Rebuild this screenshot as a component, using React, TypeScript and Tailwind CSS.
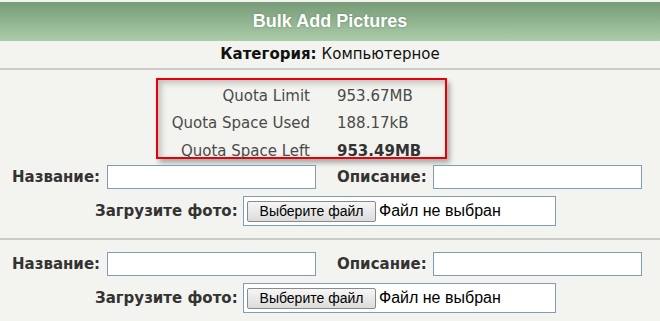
import React from 'react';

const labelFont = { fontFamily: '"DejaVu Sans", Verdana, sans-serif' };

function FileInput() {
  return (
    <div className="flex h-[30px] w-[313px] items-center border border-[#7f9db9] bg-white pl-[3px] font-['Liberation_Sans',Arial,sans-serif]">
      <div className="flex h-[21px] w-[129px] items-center justify-center rounded-[2px] border border-[#8a8a8a] bg-gradient-to-b from-[#f6f6f6] to-[#dcdcdc] text-[14px] text-black">
        Выберите файл
      </div>
      <span className="ml-[3px] text-[16px] text-black">Файл не выбран</span>
    </div>
  );
}

function PictureFields() {
  return (
    <div className="flex flex-col">
      <div className="flex h-[24px] items-center pl-[12px]">
        <span className="w-[90px] text-[15px] font-bold text-[#333]" style={labelFont}>Название:</span>
        <div className="ml-[5px] h-[24px] w-[209px] border border-[#7f9db9] bg-white" />
        <span className="ml-[21px] w-[91px] text-[15px] font-bold text-[#333]" style={labelFont}>Описание:</span>
        <div className="ml-[5px] h-[24px] w-[209px] border border-[#7f9db9] bg-white" />
      </div>
      <div className="mt-[7px] flex items-center pl-[95px]">
        <span className="w-[143px] text-[15px] font-bold text-[#333]" style={labelFont}>Загрузите фото:</span>
        <div className="ml-[5px]">
          <FileInput />
        </div>
      </div>
    </div>
  );
}

export default function App() {
  const quota = [
    ['Quota Limit', '953.67MB', false],
    ['Quota Space Used', '188.17kB', false],
    ['Quota Space Left', '953.49MB', true],
  ] as const;

  return (
    <div className="h-[321px] w-[660px] overflow-hidden bg-[#f3f4ef]">
      <div className="mt-[2px] flex h-[39px] items-center justify-center bg-gradient-to-b from-[#779a77] to-[#abcdaa]">
        <span className="font-['Liberation_Sans',Arial,sans-serif] text-[18px] font-bold text-white [text-shadow:0_0_2px_rgba(60,90,60,0.5)]">
          Bulk Add Pictures
        </span>
      </div>
      <div className="flex h-[29px] items-center justify-center border-b-2 border-[#cbcbc8] text-[15px] text-[#111]" style={labelFont}>
        <span className="font-bold">Категория:</span>
        <span className="ml-[5px]">Компьютерное</span>
      </div>

      <div className="mt-[8px] ml-[156px] h-[81px] w-[291px] border-2 border-[#e6000a] shadow-[inset_3px_3px_6px_rgba(0,0,0,0.22),3px_4px_5px_rgba(0,0,0,0.3)]">
        <div className="flex flex-col pt-[2px] text-[15px] text-[#4a4a4a]" style={labelFont}>
          {quota.map(([label, value, bold]) => (
            <div key={label} className="flex h-[27.5px] items-center">
              <span className="w-[152px] text-right">{label}</span>
              <span className={`ml-[27px] ${bold ? 'font-bold text-[#333]' : ''}`}>{value}</span>
            </div>
          ))}
        </div>
      </div>

      <div className="mt-[6px]">
        <PictureFields />
      </div>
      <div className="mt-[12px] border-t-2 border-[#cbcbc8]" />
      <div className="mt-[12px]">
        <PictureFields />
      </div>
    </div>
  );
}
